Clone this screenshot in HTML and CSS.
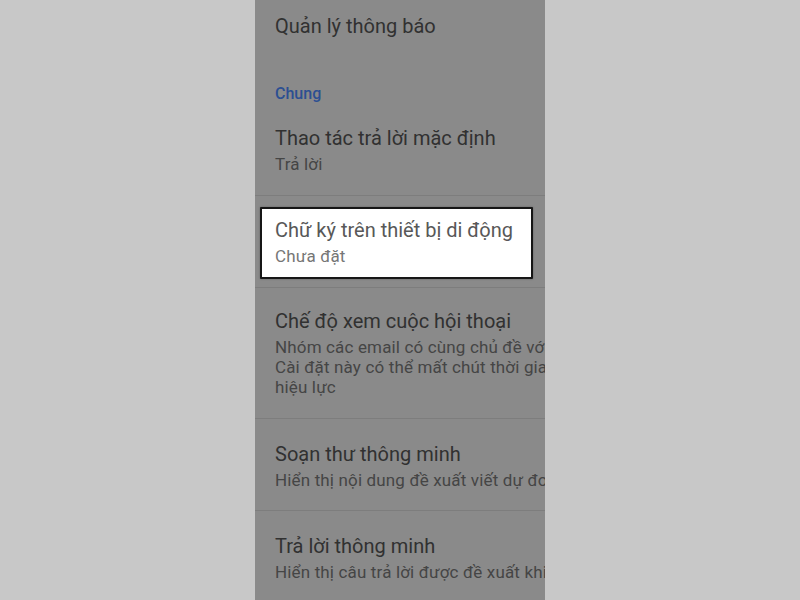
FILE: index.html
```html
<!DOCTYPE html>
<html lang="vi">
<head>
<meta charset="utf-8">
<title>Cài đặt</title>
<link rel="stylesheet" href="styles.css">
</head>
<body>
<div class="panel">
  <div class="top-item">
    <div class="title">Quản lý thông báo</div>
  </div>
  <div class="header">Chung</div>
  <div class="item first">
    <div class="title">Thao tác trả lời mặc định</div>
    <div class="sub">Trả lời</div>
  </div>
  <div class="item highlighted">
    <div class="box">
      <div class="title">Chữ ký trên thiết bị di động</div>
      <div class="sub">Chưa đặt</div>
    </div>
  </div>
  <div class="item conv">
    <div class="title">Chế độ xem cuộc hội thoại</div>
    <div class="sub">
      <span class="line">Nhóm các email có cùng chủ đề với nhau.</span>
      <span class="line">Cài đặt này có thể mất chút thời gian để có</span>
      <span class="line">hiệu lực</span>
    </div>
  </div>
  <div class="item smart">
    <div class="title">Soạn thư thông minh</div>
    <div class="sub">Hiển thị nội dung đề xuất viết dự đoán khi soạn thư</div>
  </div>
  <div class="item smart last">
    <div class="title">Trả lời thông minh</div>
    <div class="sub">Hiển thị câu trả lời được đề xuất khi có sẵn</div>
  </div>
</div>
</body>
</html>
```
FILE: styles.css
```css
html, body {
  margin: 0;
  padding: 0;
}
body {
  background: #c8c8c8;
  font-family: Roboto, "Noto Sans", "Liberation Sans", sans-serif;
  height: 600px;
  overflow: hidden;
}
.panel {
  width: 290px;
  height: 600px;
  margin: 0 auto;
  background: #8a8a8a;
  overflow: hidden;
}
.title {
  font-size: 20px;
  line-height: 24px;
  color: #313131;
  white-space: nowrap;
}
.sub {
  font-size: 17px;
  line-height: 20px;
  letter-spacing: 0.15px;
  color: #454545;
  margin-top: 4px;
  white-space: nowrap;
}
.line {
  display: block;
}
.top-item {
  padding: 14px 0 0 20px;
}
.header {
  padding: 46px 0 0 20px;
  font-size: 16px;
  line-height: 20px;
  font-weight: 500;
  color: #2c4f92;
}
.item {
  padding: 22px 0 20px 20px;
  border-bottom: 1px solid #7d7d7d;
  overflow: hidden;
}
.item.first {
  padding-top: 22px;
  padding-bottom: 21px;
}
.item.highlighted {
  padding: 11px 12px 8px 5px;
}
.box {
  background: #ffffff;
  border: 2px solid #161616;
  border-radius: 1px;
  padding: 9px 0 11px 13px;
  box-shadow: 0 0 2px rgba(0, 0, 0, 0.35);
}
.box .title {
  color: #585858;
}
.box .sub {
  color: #767676;
}
.item.conv {
  padding-top: 21px;
  padding-bottom: 21px;
}
.item.smart {
  padding-top: 23px;
  padding-bottom: 20px;
}
```
